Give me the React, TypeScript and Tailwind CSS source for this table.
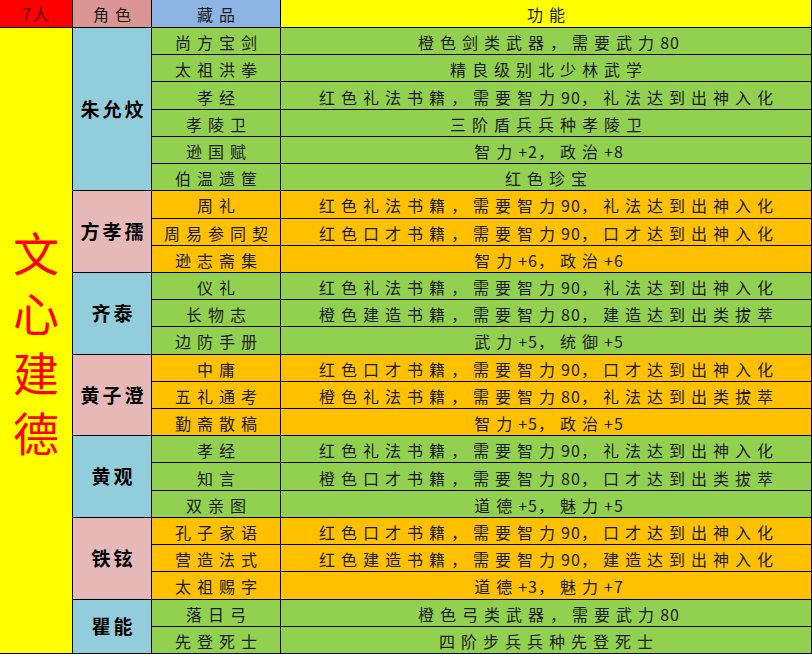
import React from 'react';

type Item = { name: string; effect: string };
type Person = { name: string; tone: 'blue' | 'pink'; items: Item[] };

const people: Person[] = [
  {
    name: '朱允炆',
    tone: 'blue',
    items: [
      { name: '尚方宝剑', effect: '橙色剑类武器，需要武力80' },
      { name: '太祖洪拳', effect: '精良级别北少林武学' },
      { name: '孝经', effect: '红色礼法书籍，需要智力90，礼法达到出神入化' },
      { name: '孝陵卫', effect: '三阶盾兵兵种孝陵卫' },
      { name: '逊国赋', effect: '智力+2，政治+8' },
      { name: '伯温遗筐', effect: '红色珍宝' },
    ],
  },
  {
    name: '方孝孺',
    tone: 'pink',
    items: [
      { name: '周礼', effect: '红色礼法书籍，需要智力90，礼法达到出神入化' },
      { name: '周易参同契', effect: '红色口才书籍，需要智力90，口才达到出神入化' },
      { name: '逊志斋集', effect: '智力+6，政治+6' },
    ],
  },
  {
    name: '齐泰',
    tone: 'blue',
    items: [
      { name: '仪礼', effect: '红色礼法书籍，需要智力90，礼法达到出神入化' },
      { name: '长物志', effect: '橙色建造书籍，需要智力80，建造达到出类拔萃' },
      { name: '边防手册', effect: '武力+5，统御+5' },
    ],
  },
  {
    name: '黄子澄',
    tone: 'pink',
    items: [
      { name: '中庸', effect: '红色口才书籍，需要智力90，口才达到出神入化' },
      { name: '五礼通考', effect: '橙色礼法书籍，需要智力80，礼法达到出类拔萃' },
      { name: '勤斋散稿', effect: '智力+5，政治+5' },
    ],
  },
  {
    name: '黄观',
    tone: 'blue',
    items: [
      { name: '孝经', effect: '红色礼法书籍，需要智力90，礼法达到出神入化' },
      { name: '知言', effect: '橙色口才书籍，需要智力80，口才达到出类拔萃' },
      { name: '双亲图', effect: '道德+5，魅力+5' },
    ],
  },
  {
    name: '铁铉',
    tone: 'pink',
    items: [
      { name: '孔子家语', effect: '红色口才书籍，需要智力90，口才达到出神入化' },
      { name: '营造法式', effect: '红色建造书籍，需要智力90，建造达到出神入化' },
      { name: '太祖赐字', effect: '道德+3，魅力+7' },
    ],
  },
  {
    name: '瞿能',
    tone: 'blue',
    items: [
      { name: '落日弓', effect: '橙色弓类武器，需要武力80' },
      { name: '先登死士', effect: '四阶步兵兵种先登死士' },
    ],
  },
];

// digits and +/- are narrower in the sheet, so they get less spacing
const Spaced = ({ text }: { text: string }) => {
  const runs = text.match(/[0-9+\-]+|[^0-9+\-]+/g) ?? [];
  return (
    <span className="pl-[6px]">
      {runs.map((r, i) =>
        /[0-9+\-]/.test(r[0]) ? (
          <span key={i} className="tracking-[1px]">{r}</span>
        ) : (
          <span key={i} className="tracking-[6px]">{r}</span>
        )
      )}
    </span>
  );
};

const App = () => {
  let row = 2;
  return (
    <div
      className="w-[812px] h-[654px] bg-black pr-px pb-px grid grid-cols-[72px_78px_128px_minmax(0,1fr)] grid-rows-[27px_repeat(23,minmax(0,1fr))] gap-px text-[16px] text-[#1c1c1c]"
      style={{ fontFamily: '"Noto Sans CJK SC", "Noto Sans", sans-serif' }}
    >
      {/* header */}
      <div className="bg-[#ff0000] flex items-center justify-center text-[17px] text-[#5e0000]">
        <span className="tracking-[1px]">7人</span>
      </div>
      <div className="bg-[#da9694] flex items-center justify-center">
        <Spaced text="角色" />
      </div>
      <div className="bg-[#8db4e2] flex items-center justify-center">
        <Spaced text="藏品" />
      </div>
      <div className="bg-[#ffff00] flex items-center justify-center">
        <Spaced text="功能" />
      </div>

      {/* side label */}
      <div className="bg-[#ffff00] row-start-2 row-span-23 col-start-1 flex flex-col items-center justify-center text-[46px] leading-[60px] text-[#ff0000]">
        <span>文</span>
        <span>心</span>
        <span>建</span>
        <span>德</span>
      </div>

      {people.map((p) => {
        const start = row;
        row += p.items.length;
        const nameBg = p.tone === 'blue' ? 'bg-[#92cddc]' : 'bg-[#e6b8b7]';
        const rowBg = p.tone === 'blue' ? 'bg-[#92d050]' : 'bg-[#ffc000]';
        return (
          <React.Fragment key={p.name}>
            <div
              className={`${nameBg} col-start-2 flex items-center justify-center text-[19px] font-bold text-black`}
              style={{ gridRow: `${start} / span ${p.items.length}` }}
            >
              <span className="tracking-[3px] pl-[3px]">{p.name}</span>
            </div>
            {p.items.map((it, i) => (
              <React.Fragment key={it.name + i}>
                <div
                  className={`${rowBg} col-start-3 flex items-center justify-center pt-[2px] leading-none`}
                  style={{ gridRow: `${start + i}` }}
                >
                  <Spaced text={it.name} />
                </div>
                <div
                  className={`${rowBg} col-start-4 flex items-center justify-center pt-[2px] leading-none`}
                  style={{ gridRow: `${start + i}` }}
                >
                  <Spaced text={it.effect} />
                </div>
              </React.Fragment>
            ))}
          </React.Fragment>
        );
      })}
    </div>
  );
};

export default App;
